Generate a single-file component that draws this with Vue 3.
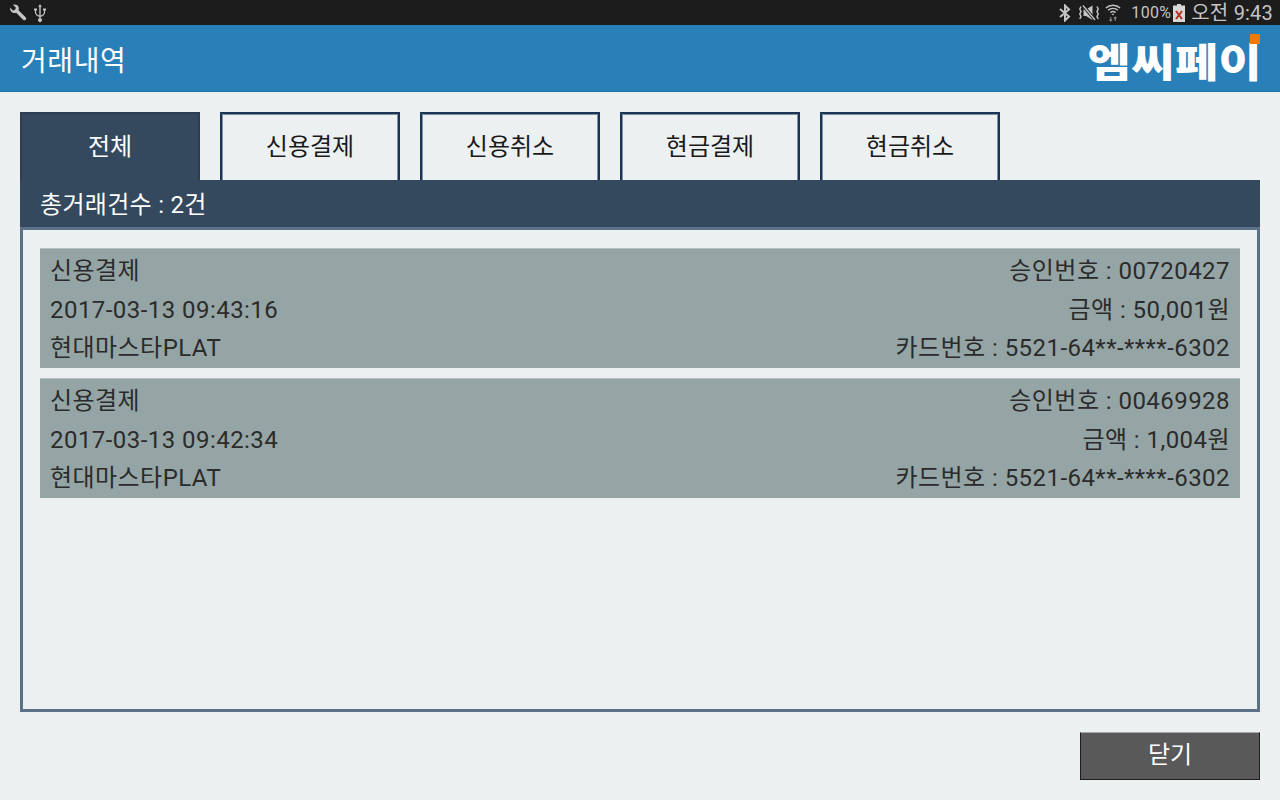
<template>
  <div class="screen">
    <div class="status">
      <div class="status-left">
        <svg class="ic" width="20" height="20" viewBox="0 0 20 20"><path d="M2 4.500 5 7.400 7.200 6.800 7.800 4.600 4.900 1.700C7 .9 9.600 1.700 10.500 3.800 11 5 10.900 6.200 10.500 7.200L17.600 14.200C18.400 15 18.400 16.100 17.700 16.800 17 17.500 15.900 17.500 15.100 16.700L8.200 9.800C6.900 10.300 5.200 10.100 4 9.200 2.500 8.100 1.600 6.300 2 4.500Z" fill="#c4c4c4"/></svg>
        <svg class="ic usb" width="14" height="20" viewBox="0 0 14 20"><path d="M7 1 5.300 4H6.300V12.400C4.300 12 3.100 10.700 3.100 9V7.600H4V5.400H1V7.600H1.900V9C1.900 11.400 3.600 13.300 6.300 13.700V15.300A1.900 1.900 0 1 0 7.700 15.300V13.700C10.400 13.300 12.100 11.400 12.100 9V7.600H13V5.400H10V7.600H10.900V9C10.900 10.700 9.700 12 7.700 12.400V4H8.700Z" fill="#c4c4c4"/></svg>
      </div>
      <div class="status-right">
        <svg width="14" height="18" viewBox="0 0 14 18"><path d="M2 5 11 12.500 7 16.500V1.500L11 5.500 2 13" fill="none" stroke="#c4c4c4" stroke-width="2"/></svg>
        <svg class="mute" width="20" height="18" viewBox="0 0 20 18"><g fill="none" stroke="#c4c4c4" stroke-width="1.500"><path d="M2 2.500 .8 5 2 7.500 .8 10 2 12.500 .8 15"/><path d="M18 2.500 19.200 5 18 7.500 19.200 10 18 12.500 19.200 15"/></g><path d="M4.500 5.500H7L13.500 1.500V16L7 12H4.500Z" fill="#c4c4c4"/><path d="M4 1.500 16 16" stroke="#1c1c1c" stroke-width="3.200"/><path d="M4 1.500 16 16" stroke="#c4c4c4" stroke-width="1.300"/></svg>
        <svg class="wifi" width="16" height="21" viewBox="0 0 18 21"><g fill="none" stroke="#c4c4c4" stroke-width="1.600"><path d="M1 5.500C5.500 1.300 12.500 1.300 17 5.500"/><path d="M3.500 8C6.500 5.200 11.500 5.200 14.500 8"/><path d="M6 10.500C7.700 9.100 10.300 9.100 12 10.500"/></g><path d="M7.300 12H10.700L9 14Z" fill="#c4c4c4"/><path d="M6.500 15.500V20M5 18.500 6.500 20 8 18.500M11.500 20V15.500M10 17 11.500 15.500 13 17" fill="none" stroke="#8a8a8a" stroke-width="1.200"/></svg>
        <span class="pct">100%</span>
        <svg class="batt" width="12" height="18" viewBox="0 0 12 18"><path d="M4 0H8V1.500H12V18H0V1.500H4Z" fill="#d8d8d8"/><path d="M3 7 9 15M9 7 3 15" stroke="#b5321f" stroke-width="2"/></svg>
        <span class="clock">오전 9:43</span>
      </div>
    </div>

    <header class="appbar">
      <h1 class="title">거래내역</h1>
      <div class="logo">
        <span class="logo-text">엠씨페이</span>
        <i class="logo-dot"></i>
      </div>
    </header>

    <main class="content">
      <div class="tabs">
        <div
          v-for="(tab, i) in tabs"
          :key="tab"
          :class="['tab', { active: i === 0 }]"
        >{{ tab }}</div>
      </div>
      <div class="summary">총거래건수 : 2건</div>
      <div class="list">
        <div v-for="row in rows" :key="row.no" class="row">
          <div class="line"><span>신용결제</span><span>승인번호 : {{ row.no }}</span></div>
          <div class="line"><span>{{ row.date }}</span><span>금액 : {{ row.amount }}원</span></div>
          <div class="line"><span>현대마스타PLAT</span><span>카드번호 : 5521-64**-****-6302</span></div>
        </div>
      </div>
      <div class="actions">
        <button class="close">닫기</button>
      </div>
    </main>
  </div>
</template>

<script setup>
const tabs = ['전체', '신용결제', '신용취소', '현금결제', '현금취소']

const rows = [
  { no: '00720427', date: '2017-03-13 09:43:16', amount: '50,001' },
  { no: '00469928', date: '2017-03-13 09:42:34', amount: '1,004' },
]
</script>

<style>
html, body { margin: 0; background: #ecf0f1; }
</style>

<style scoped>
.screen {
  width: 1280px;
  height: 800px;
  overflow: hidden;
  display: flex;
  flex-direction: column;
  background: #ecf0f1;
  font-family: Roboto, "Noto Sans CJK KR", sans-serif;
}

.status {
  height: 25px;
  flex: none;
  background: #1c1c1c;
  display: flex;
  justify-content: space-between;
  align-items: center;
  padding: 0 7px 0 8px;
  color: #c4c4c4;
}
.status-left, .status-right { display: flex; align-items: center; }
.status-left { gap: 5px; }
.status-right svg { display: block; flex: none; }
.mute { margin-left: 7px; }
.wifi { margin-left: 6px; }
.pct { font-size: 16px; margin-left: 10px; letter-spacing: 0.3px; }
.batt { margin-left: 2px; }
.clock { font-size: 20px; margin-left: 6px; letter-spacing: 0.2px; line-height: 24px; }

.appbar {
  height: 67px;
  flex: none;
  box-sizing: border-box;
  background: #2980b9;
  border-bottom: 1px solid #2472a6;
  display: flex;
  justify-content: space-between;
  align-items: center;
  padding: 2px 20px 0 21px;
}
.title {
  margin: 0;
  font-size: 28px;
  font-weight: 400;
  color: #fff;
  letter-spacing: 0.6px;
}
.logo { position: relative; height: 67px; margin-top: -2px; display: flex; align-items: center; }
.logo-text {
  font-size: 40px;
  font-weight: 900;
  color: #fff;
  letter-spacing: 0.5px;
  line-height: 1;
  margin-top: 12px;
  margin-right: -2px;
  transform: scaleX(1.17);
  transform-origin: right center;
}
.logo-dot {
  position: absolute;
  right: 0;
  top: 9px;
  width: 10px;
  height: 10px;
  background: #ee7a00;
}

.content {
  flex: 1;
  display: flex;
  flex-direction: column;
  padding: 20px 20px 20px;
  min-height: 0;
}
.tabs { display: flex; gap: 20px; flex: none; }
.tab {
  width: 180px;
  height: 68px;
  box-sizing: border-box;
  border: 2px solid #1c3557;
  border-bottom: none;
  box-shadow: inset 1px 1px 0 #7f90a3, inset -1px 0 0 #7f90a3;
  background: #ecf0f1;
  color: #1a1a1a;
  font-size: 24px;
  display: flex;
  align-items: center;
  justify-content: center;
  padding-bottom: 6px;
}
.tab.active { background: #34495e; border-color: #2c3e50; color: #fff; box-shadow: none; }

.summary {
  height: 47px;
  flex: none;
  box-sizing: border-box;
  background: #34495e;
  color: #fff;
  font-size: 24px;
  letter-spacing: 0.3px;
  line-height: 50px;
  padding-left: 20px;
}
.list {
  height: 485px;
  flex: none;
  box-sizing: border-box;
  border: 3px solid #5d7186;
  padding: 18px 17px 15px;
  display: flex;
  flex-direction: column;
  gap: 10px;
}
.row {
  height: 120px;
  flex: none;
  box-sizing: border-box;
  background: #95a5a6;
  border-top: 1px solid #b3bfc0;
  color: #2b2b2b;
  font-size: 24px;
  letter-spacing: 0.45px;
  padding: 3px 10px 0;
  display: flex;
  flex-direction: column;
}
.line {
  height: 38.500px;
  line-height: 38.500px;
  display: flex;
  justify-content: space-between;
}

.actions {
  display: flex;
  justify-content: flex-end;
  margin-top: 20px;
}
.close {
  width: 180px;
  height: 48px;
  box-sizing: border-box;
  border: 1px solid #1c1c1c;
  border-top-color: #a5abad;
  background: #595959;
  color: #fff;
  font-family: inherit;
  font-size: 24px;
  line-height: 44px;
  padding: 0 0 2px;
}
</style>
